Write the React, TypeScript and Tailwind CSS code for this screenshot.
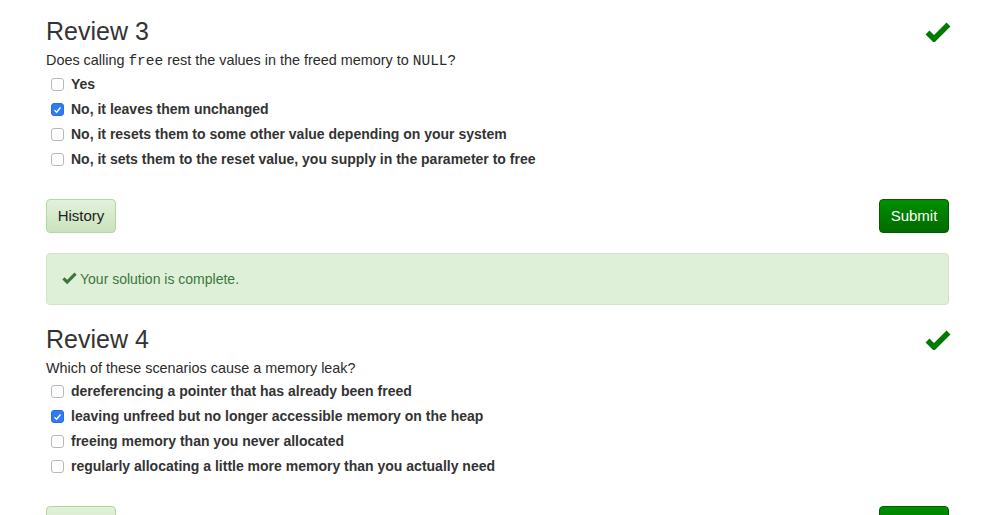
import React from "react";

type Review = {
  title: string;
  question: React.ReactNode;
  options: string[];
  picked: number;
};

const reviews: Review[] = [
  {
    title: "Review 3",
    question: (
      <>
        Does calling <code className="font-['Liberation_Mono',monospace] text-[14.5px]">free</code> rest the values in the
        freed memory to <code className="font-['Liberation_Mono',monospace] text-[14.5px]">NULL</code>?
      </>
    ),
    options: [
      "Yes",
      "No, it leaves them unchanged",
      "No, it resets them to some other value depending on your system",
      "No, it sets them to the reset value, you supply in the parameter to free",
    ],
    picked: 1,
  },
  {
    title: "Review 4",
    question: "Which of these scenarios cause a memory leak?",
    options: [
      "dereferencing a pointer that has already been freed",
      "leaving unfreed but no longer accessible memory on the heap",
      "freeing memory than you never allocated",
      "regularly allocating a little more memory than you actually need",
    ],
    picked: 1,
  },
];

function BigCheck() {
  return (
    <svg width="26" height="20" viewBox="0 0 26 20" className="mt-[6px] -mr-[2px]">
      <path d="M2.5 10.5 L9 17 L23.5 2.5" fill="none" stroke="#007a00" strokeWidth="5.5" strokeLinejoin="miter" />
    </svg>
  );
}

function SmallCheck() {
  return (
    <svg width="15" height="12" viewBox="0 0 26 20" className="inline-block mr-[3px] -mt-[3px] align-middle">
      <path d="M2.5 10.5 L9 17 L23.5 2.5" fill="none" stroke="#3c763d" strokeWidth="5.5" />
    </svg>
  );
}

function Box({ checked }: { checked: boolean }) {
  if (checked) {
    return (
      <span className="w-[13px] h-[13px] rounded-[3px] bg-[#2f7bf5] border border-[#2a6fe0] flex items-center justify-center">
        <svg width="9" height="8" viewBox="0 0 9 8">
          <path d="M1.5 4.2 L3.6 6.2 L7.5 1.5" fill="none" stroke="white" strokeWidth="1.4" />
        </svg>
      </span>
    );
  }
  return <span className="w-[13px] h-[13px] rounded-[3px] bg-white border border-[#b9b9b9]" />;
}

function ReviewBlock({ r, last }: { r: Review; last?: boolean }) {
  return (
    <section className="mt-[16px]">
      <div className="flex justify-between items-start h-[30px]">
        <h2 className="text-[25px] leading-[30px] text-[#333]">{r.title}</h2>
        <BigCheck />
      </div>
      <p className="mt-[4px] text-[14.4px] leading-[20px] text-[#2b2b2b]">{r.question}</p>
      <div className="mt-[1px]">
        {r.options.map((o, i) => (
          <label key={o} className="flex items-center h-[25px] pl-[5px] gap-[7px] text-[14px] font-bold text-[#333]">
            <Box checked={i === r.picked} />
            <span>{o}</span>
          </label>
        ))}
      </div>
      <div className="mt-[27px] flex justify-between">
        <button className="w-[70px] h-[34px] rounded-[4px] border border-[#b2d8a0] bg-gradient-to-b from-[#e3f1dc] to-[#c9e2bd] text-[15px] text-[#222]">
          History
        </button>
        <button className="w-[70px] h-[34px] rounded-[4px] border border-[#005c00] bg-gradient-to-b from-[#008f00] to-[#006b00] text-[15px] text-white">
          Submit
        </button>
      </div>
      {!last && (
        <div className="mt-[20px] h-[52px] rounded-[4px] border border-[#d0e6be] bg-[#dff0d8] px-[15px] flex items-center text-[14px] text-[#3c763d]">
          <SmallCheck />
          Your solution is complete.
        </div>
      )}
    </section>
  );
}

export default function App() {
  return (
    <div className="w-[1002px] h-[515px] overflow-hidden bg-white font-['Liberation_Sans',Arial,sans-serif]">
      <div className="ml-[46px] w-[903px]">
        {reviews.map((r, i) => (
          <div key={r.title} className={i > 0 ? "pt-[3px]" : ""}>
            <ReviewBlock r={r} last={i === reviews.length - 1} />
          </div>
        ))}
      </div>
    </div>
  );
}
